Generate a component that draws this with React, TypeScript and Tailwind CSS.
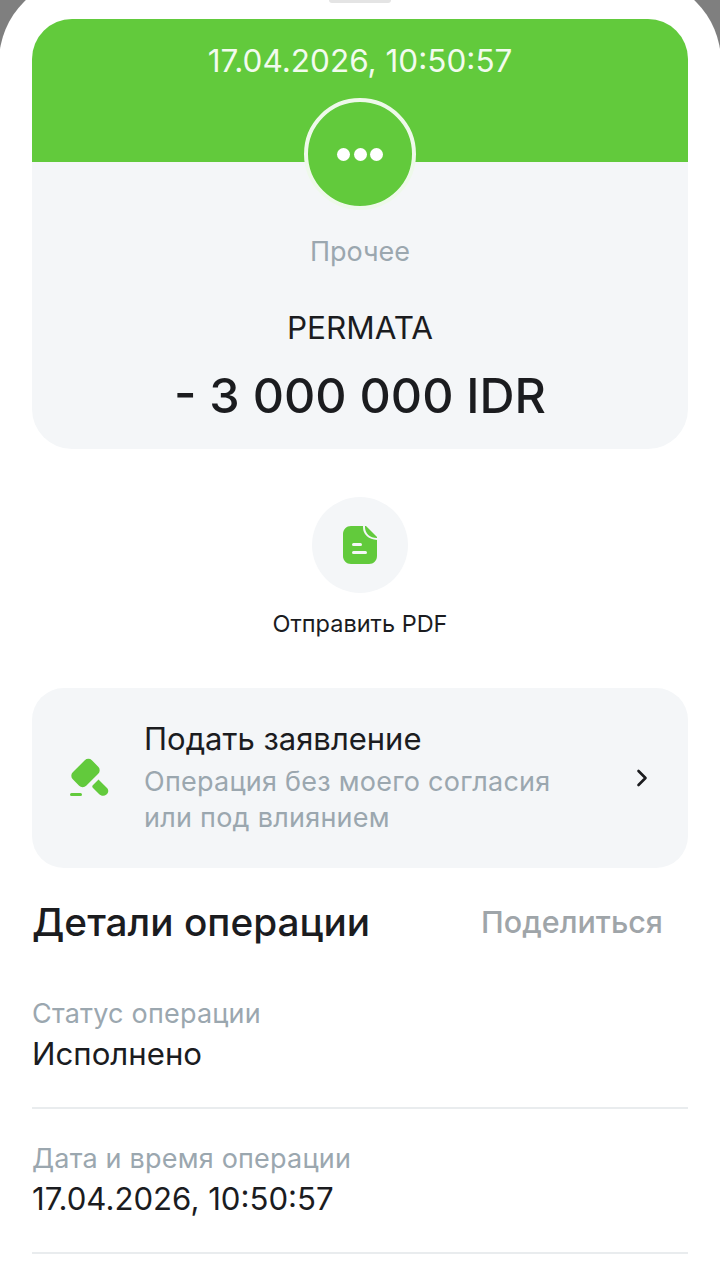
import React from 'react';
import { ChevronRight } from 'lucide-react';

const details = [
  { label: 'Статус операции', value: 'Исполнено' },
  { label: 'Дата и время операции', value: '17.04.2026, 10:50:57' },
];

const App = () => {
  return (
    <div className="h-[1280px] overflow-hidden bg-[#7f7f7f] font-['Inter',sans-serif]">
      <div className="relative -mx-[1px] -mt-[23px] h-[1303px] rounded-t-[85px] bg-white px-[33px] pt-[42px]">
        {/* Sheet handle */}
        <div className="absolute left-[330px] top-[23px] h-[3px] w-[62px] rounded-b bg-[#e4e4e4]" />

        {/* Operation card */}
        <div className="relative h-[430px] overflow-hidden rounded-[40px] bg-[#f4f6f8] text-center">
          <div className="h-[143px] bg-[#62ca3c] pt-[21px] text-[31.5px] leading-[42px] text-[#f2fbee]">
            17.04.2026, 10:50:57
          </div>
          <div className="absolute left-[272px] top-[79px] flex h-[112px] w-[112px] items-center justify-center gap-[3.5px] rounded-full border-[4px] border-[#eef9ea] bg-[#62ca3c]">
            <span className="h-[13px] w-[13px] rounded-full bg-white" />
            <span className="h-[13px] w-[13px] rounded-full bg-white" />
            <span className="h-[13px] w-[13px] rounded-full bg-white" />
          </div>
          <div className="mt-[72px] text-[27px] leading-[36px] text-[#9ba7af]">Прочее</div>
          <div className="mt-[38px] text-[31.5px] leading-[40px] text-[#1b1c1f]">PERMATA</div>
          <div className="mt-[19px] text-[48.5px] font-medium leading-[58px] text-[#1b1c1f]">- 3 000 000 IDR</div>
        </div>

        {/* PDF action */}
        <div className="mt-[48px] flex flex-col items-center">
          <div className="flex h-[96px] w-[96px] items-center justify-center rounded-full bg-[#f4f6f8]">
            <svg width="34" height="38" viewBox="0 0 34 38" fill="none">
              <path d="M8 0H23L34 11V30C34 34.500 30.500 38 26 38H8C3.500 38 0 34.500 0 30V8C0 3.500 3.500 0 8 0Z" fill="#62ca3c" />
              <path d="M21 -1V1C21 8 26 13 35 13" stroke="#f4f6f8" strokeWidth="2" />
              <rect x="9" y="17" width="10" height="3" rx="1.500" fill="#f4f6f8" />
              <rect x="9" y="25" width="15" height="3" rx="1.500" fill="#f4f6f8" />
            </svg>
          </div>
          <div className="mt-[17px] text-[23.5px] leading-[28px] text-[#1b1c1f]">Отправить PDF</div>
        </div>

        {/* Complaint card */}
        <div className="mt-[50px] flex h-[180px] items-center rounded-[32px] bg-[#f4f6f8] pl-[37px] pr-[32px]">
          <svg width="40" height="40" viewBox="0 0 40 40" fill="none" className="shrink-0">
            <rect x="3" y="5.500" width="27" height="19" rx="5" transform="rotate(-45 16.500 15)" fill="#62ca3c" />
            <path d="M29.500 21.500L38 30C40 32 39.500 35 37.500 36.500C35 38.500 32 38 30 36L24 30C23 29 23 28 24 27Z" fill="#62ca3c" />
            <rect x="1" y="35" width="12" height="3" rx="1.500" fill="#62ca3c" />
          </svg>
          <div className="ml-[35px] flex-1">
            <div className="text-[31px] leading-[38px] text-[#1b1c1f]">Подать заявление</div>
            <div className="mt-[6px] text-[27px] leading-[36px] tracking-[0.25px] text-[#9ba7af]">
              Операция без моего согласия
              <br />
              или под влиянием
            </div>
          </div>
          <ChevronRight size={28} strokeWidth={2.25} className="text-[#1b1c1f]" />
        </div>

        {/* Details */}
        <div className="mt-[30px] flex items-center justify-between pr-[25px]">
          <div className="text-[38.75px] font-medium leading-[48px] text-[#1b1c1f]">Детали операции</div>
          <div className="text-[30.5px] font-medium leading-[48px] text-[#9fa5a9]">Поделиться</div>
        </div>
        <div className="mt-[50px]">
          {details.map((row) => (
            <div key={row.label} className="mb-[32px] h-[113px] border-b-2 border-[#e9ecee]">
              <div className="text-[27px] leading-[36px] tracking-[0.2px] text-[#9ba7af]">{row.label}</div>
              <div className="mt-[2px] text-[31.2px] leading-[40px] text-[#1b1c1f]">{row.value}</div>
            </div>
          ))}
        </div>
      </div>
    </div>
  );
};

export default App;
